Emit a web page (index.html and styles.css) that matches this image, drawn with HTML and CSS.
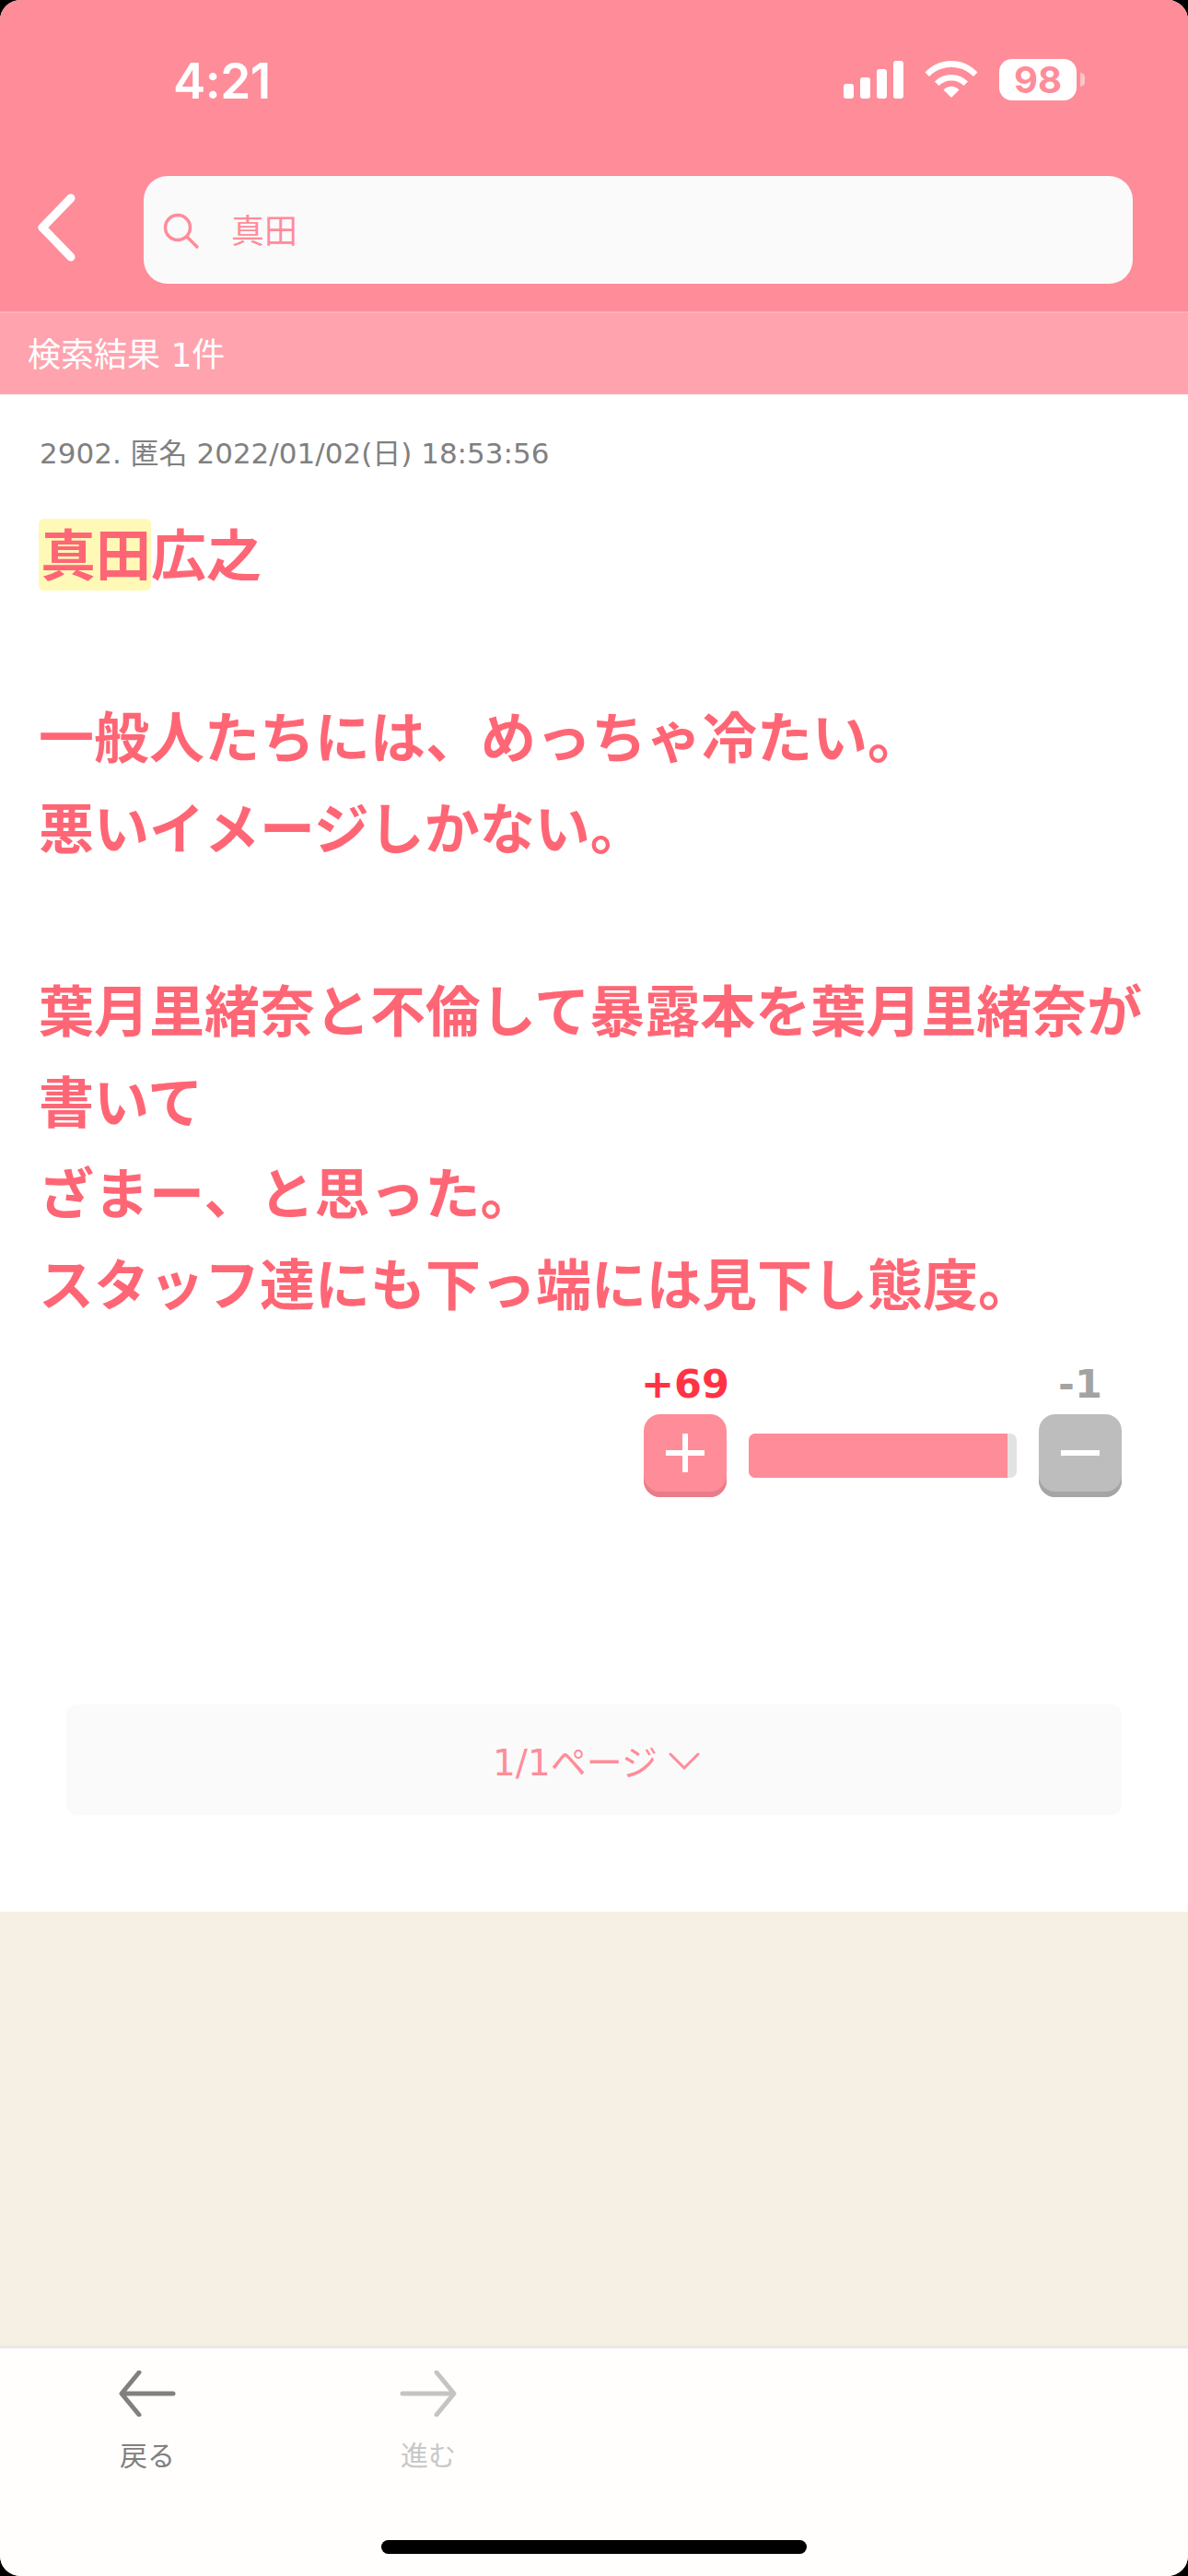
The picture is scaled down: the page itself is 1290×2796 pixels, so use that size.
FILE: index.html
```html
<!DOCTYPE html>
<html lang="ja">
<head>
<meta charset="utf-8">
<title>検索結果</title>
<link rel="stylesheet" href="styles.css">
</head>
<body>
<div class="app">
  <header class="header">
    <div class="status">
      <span class="time">4:21</span>
      <div class="status-icons">
        <svg class="signal" width="66" height="42" viewBox="0 0 66 42"><rect x="0" y="25" width="11" height="16" rx="3"/><rect x="18" y="18" width="11" height="23" rx="3"/><rect x="36" y="9" width="11" height="32" rx="3"/><rect x="54" y="0" width="11" height="41" rx="3"/></svg>
        <svg class="wifi" width="58" height="42" viewBox="0 0 58 42"><path d="M0.5 13.5C8 5.500 18 1 29 1s21 4.500 28.500 12.500l-4.500 4.500C46.500 11.500 38.500 8 29 8S11.500 11.500 5 18Z"/><path d="M11 23.500C15.500 19 22 16 29 16s13.500 3 18 7.500l-4.500 4.500C39 24.500 34.500 22.500 29 22.500S19 24.500 15.500 28Z"/><path d="M20.500 32.500C23 30 26 28.800 29 28.800s6 1.200 8.500 3.700L29 41Z"/></svg>
        <div class="battery"><span class="battery-body">98</span><span class="battery-nub"></span></div>
      </div>
    </div>
    <div class="search-row">
      <svg class="back" width="46" height="74" viewBox="0 0 46 74"><path d="M38 5 7 37l31 32" fill="none" stroke="#fff" stroke-width="9" stroke-linecap="round" stroke-linejoin="round"/></svg>
      <div class="search-box">
        <svg class="search-icon" width="40" height="40" viewBox="0 0 40 40"><circle cx="16" cy="16" r="13.500" fill="none" stroke="#ff8c99" stroke-width="3.500"/><path d="m26 26 11 11" stroke="#ff8c99" stroke-width="3.500" stroke-linecap="round"/></svg>
        <span class="search-text">真田</span>
      </div>
    </div>
  </header>
  <div class="result-bar">検索結果 1件</div>
  <main class="content">
    <div class="meta">2902. 匿名 2022/01/02(日) 18:53:56</div>
    <p class="post"><mark class="hit">真田</mark>広之<br><br>一般人たちには、めっちゃ冷たい。<br>悪いイメージしかない。<br><br>葉月里緒奈と不倫して暴露本を葉月里緒奈が書いて<br>ざまー、と思った。<br>スタッフ達にも下っ端には見下し態度。</p>
    <div class="vote">
      <div class="vote-col">
        <span class="count count-plus">+69</span>
        <div class="vote-btn vote-plus"><svg width="42" height="42" viewBox="0 0 42 42"><path d="M0 21h42M21 0v42" stroke="#fff" stroke-width="6"/></svg></div>
      </div>
      <div class="bar"><div class="bar-fill" style="width:96.600%"></div></div>
      <div class="vote-col">
        <span class="count count-minus">-1</span>
        <div class="vote-btn vote-minus"><svg width="42" height="42" viewBox="0 0 42 42"><path d="M0 21h42" stroke="#fff" stroke-width="6"/></svg></div>
      </div>
    </div>
    <div class="pager">
      <span>1/1ページ</span>
      <svg width="34" height="20" viewBox="0 0 34 20"><path d="M2 2l15 15L32 2" fill="none" stroke="#ff8c99" stroke-width="3" stroke-linecap="round" stroke-linejoin="round"/></svg>
    </div>
  </main>
  <div class="spacer"></div>
  <footer class="footer">
    <div class="nav">
      <div class="nav-item">
        <svg width="62" height="50" viewBox="0 0 62 50"><path d="M59 25H4M22 2 3 25l19 23" fill="none" stroke="#808080" stroke-width="5" stroke-linecap="round" stroke-linejoin="round"/></svg>
        <span class="nav-label">戻る</span>
      </div>
      <div class="nav-item nav-off">
        <svg width="62" height="50" viewBox="0 0 62 50"><path d="M3 25h55M40 2l19 23-19 23" fill="none" stroke="#c4c4c4" stroke-width="5" stroke-linecap="round" stroke-linejoin="round"/></svg>
        <span class="nav-label">進む</span>
      </div>
    </div>
    <div class="home-bar"></div>
  </footer>
</div>
</body>
</html>
```
FILE: styles.css
```css
html, body { margin: 0; padding: 0; background: #000; }
body { width: 1290px; height: 2796px; overflow: hidden; font-family: "DejaVu Sans", "Noto Sans CJK JP", sans-serif; }
.app { width: 1290px; height: 2796px; display: flex; flex-direction: column; border-radius: 22px; overflow: hidden; background: #f6efe4; }

.header { height: 338px; background: #ff8c99; display: flex; flex-direction: column; box-sizing: border-box; }
.status { height: 191px; box-sizing: border-box; padding: 59px 112px 0 188px; display: flex; justify-content: space-between; align-items: flex-start; }
.time { font-family: Inter, sans-serif; font-weight: 600; font-size: 53px; line-height: 58px; color: #fff; letter-spacing: -0.5px; }
.status-icons { display: flex; align-items: flex-start; }
.signal { fill: #fff; margin-top: 7px; margin-right: 22px; }
.wifi { fill: #fff; margin-top: 6px; margin-right: 23px; }
.battery { display: flex; align-items: center; margin-top: 5px; }
.battery-body { width: 84px; height: 45px; border-radius: 14px; background: #fff; color: #ff8c99; font-family: Inter, sans-serif; font-weight: 700; font-size: 40px; line-height: 45px; text-align: center; }
.battery-nub { width: 5px; height: 15px; margin-left: 4px; background: #ffc3ca; border-radius: 0 6px 6px 0; }

.search-row { display: flex; align-items: center; padding: 0 60px 0 39px; }
.back { flex: none; margin-right: 71px; margin-bottom: 5px; }
.search-box { flex: 1; height: 117px; box-sizing: border-box; background: #fafafa; border-radius: 26px; display: flex; align-items: center; padding-left: 21px; }
.search-icon { flex: none; margin-right: 34px; margin-top: 2px; }
.search-text { font-family: "Noto Sans CJK JP", sans-serif; font-size: 36px; color: #ff8c99; margin-top: -3px; }

.result-bar { height: 90px; box-sizing: border-box; background: #ffa3ae; border-top: 2px solid #ffb0ba; padding-left: 30px; color: #fff; font-size: 36px; line-height: 92px; }

.content { height: 1647px; box-sizing: border-box; background: #fff; padding: 0 44px; display: flex; flex-direction: column; flex: none; }
.meta { margin-top: 46px; margin-left: -1px; font-size: 31px; line-height: 36px; color: #808080; white-space: nowrap; }
.post { margin: 39px 0 0 -2px; font-family: "Noto Sans CJK JP", sans-serif; font-weight: 700; font-size: 60px; line-height: 99px; color: #ff6675; }
.hit { display: inline-block; background: #fff9b8; color: inherit; border-radius: 6px; line-height: 72px; padding: 0 0 6px 2px; vertical-align: baseline; }

.vote { display: flex; align-items: flex-end; justify-content: flex-end; margin-top: 37px; padding-right: 28px; }
.vote-col { width: 90px; display: flex; flex-direction: column; align-items: center; }
.count { font-weight: 700; font-size: 43px; line-height: 50px; white-space: nowrap; margin-bottom: 8px; }
.count-plus { color: #ff3345; }
.count-minus { color: #a3a3a3; }
.vote-btn { width: 90px; height: 90px; box-sizing: border-box; border-radius: 18px; display: flex; align-items: center; justify-content: center; padding-bottom: 6px; }
.vote-plus { background: #ff8c99; box-shadow: inset 0 -6px 0 #e87d8a; }
.vote-minus { background: #bdbdbd; box-shadow: inset 0 -6px 0 #a5a5a5; }
.bar { width: 291px; height: 48px; margin: 0 24px 21px; border-radius: 7px; background: #e2e2e2; overflow: hidden; }
.bar-fill { height: 100%; background: #ff8c99; }

.pager { margin: 225px 28px 0; height: 120px; padding-left: 5px; background: #fafafa; border-radius: 12px; display: flex; align-items: center; justify-content: center; gap: 12px; font-size: 39px; color: #ff8c99; }
.pager svg { margin-top: 4px; }

.spacer { flex: 1; background: #f6efe4; }
.footer { height: 250px; flex: none; box-sizing: border-box; background: #fffefc; border-top: 3px solid #e9e9e7; display: flex; flex-direction: column; }
.nav { display: flex; padding: 24px 0 0 129px; gap: 243px; height: 208px; box-sizing: border-box; }
.nav-item { display: flex; flex-direction: column; align-items: center; width: 62px; }
.nav-label { font-family: "Noto Sans CJK JP", sans-serif; font-size: 30px; line-height: 40px; color: #808080; margin-top: 20px; white-space: nowrap; }
.nav-off .nav-label { color: #c8c8c8; }
.home-bar { width: 462px; height: 15px; margin-left: 414px; background: #000; border-radius: 8px; }
```
